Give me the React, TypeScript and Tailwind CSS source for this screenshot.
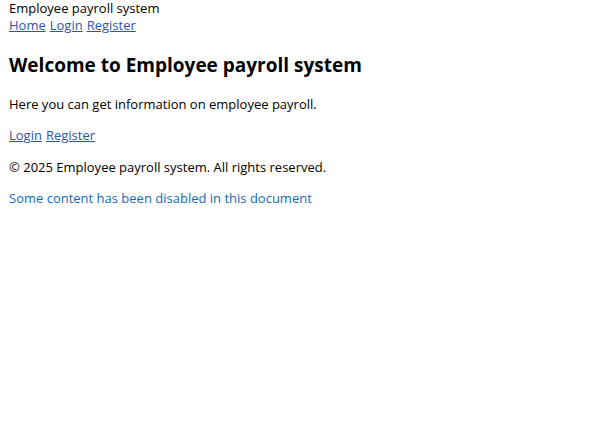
import React from "react";

export default function App() {
    return (
        <div className="min-h-[439px] bg-white px-[9px] text-[13px] text-black font-['Open_Sans',sans-serif]">
            <div className="leading-[17px]">Employee payroll system</div>
            <nav className="leading-[17px] flex gap-[4px]">
                <a href="#" className="underline text-[#2f55a4]">Home</a>
                <a href="#" className="underline text-[#2f55a4]">Login</a>
                <a href="#" className="underline text-[#2f55a4]">Register</a>
            </nav>
            <h1 className="mt-[18px] text-[19px] font-bold leading-[26px]">
                Welcome to Employee payroll system
            </h1>
            <p className="mt-[18px] leading-[17px]">Here you can get information on employee payroll.</p>
            <div className="mt-[14px] leading-[17px] flex gap-[4px]">
                <a href="#" className="underline text-[#2f55a4]">Login</a>
                <a href="#" className="underline text-[#2f55a4]">Register</a>
            </div>
            <p className="mt-[15px] leading-[17px]">© 2025 Employee payroll system. All rights reserved.</p>
            <p className="mt-[14px] leading-[17px] text-[#0f6cbd]">Some content has been disabled in this document</p>
        </div>
    );
}
